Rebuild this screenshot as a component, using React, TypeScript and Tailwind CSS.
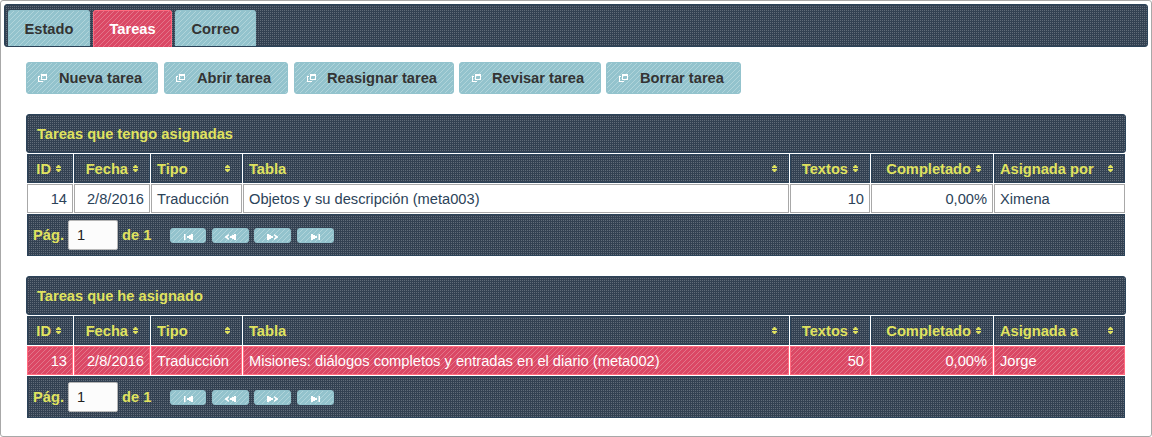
import React, { useState } from "react";

const dots =
  "bg-[#334152] bg-[conic-gradient(from_90deg_at_50%_50%,#616c79_25%,transparent_0)] bg-[length:2px_2px]";
const aqua =
  "bg-[#93c3cd] bg-[linear-gradient(135deg,transparent_44%,#b0d4da_44%,#b0d4da_56%,transparent_56%)] bg-[length:5px_5px] border border-[#93c3cd]";
const rose =
  "bg-[#db4865] bg-[linear-gradient(135deg,transparent_44%,#e2768a_44%,#e2768a_56%,transparent_56%)] bg-[length:5px_5px] border border-[#ff6b7f]";

const grid = "grid grid-cols-[46px_76px_91px_546px_80px_122px_131px] gap-x-px";

function WindowIcon() {
  return (
    <svg className="shrink-0" width="9" height="8" viewBox="0 0 9 8" fill="#fff" shapeRendering="crispEdges">
      <path d="M3 0h6v6H3zM4 2v3h4V2z" fillRule="evenodd" />
      <path d="M0 2h2v1H1v4h4v1H0z" />
    </svg>
  );
}

function SortIcon() {
  return (
    <svg className="shrink-0" width="5" height="7" viewBox="0 0 5 7" fill="#e0e35f">
      <path d="M2 0h1l2 2v1H0V2zM0 4h5v1L3 7H2L0 5z" />
    </svg>
  );
}

const pagerPaths = [
  "M0 0h1.5v6H0zM9 0v6H7V5H5V4H3V2h2V1h2V0z",
  "M4 0v1.6L2.4 3 4 4.4V6L0 3.5v-1zM11 0v6H9V5H7V4H5V2h2V1h2V0z",
  "M7 0v1.6L8.6 3 7 4.4V6l4-2.5v-1zM0 0v6h2V5h2V4h2V2H4V1H2V0z",
  "M7.5 0H9v6H7.5zM0 0v6h2V5h2V4h2V2H4V1H2V0z",
];
const pagerBoxes = [
  "ml-[19px] w-9",
  "ml-1.5 w-[37px]",
  "ml-[5px] w-[37px]",
  "ml-1.5 w-[37px]",
];
const pagerNames = ["Primera", "Anterior", "Siguiente", "Última"];

function Pager() {
  const [page, setPage] = useState("1");
  return (
    <div className={`mx-px mt-px flex h-[42px] items-center border border-[#2c4359] pl-[5px] font-bold text-[#e0e35f] ${dots}`}>
      <span className="w-[35px]">Pág.</span>
      <input
        className="h-[30px] w-[50px] rounded-[2px] border border-[#b6b6b6] bg-[#fcfcfc] pl-2 font-normal text-[#222]"
        value={page}
        onChange={(e) => setPage(e.target.value)}
      />
      <span className="ml-1 w-[29px] whitespace-nowrap">de 1</span>
      {pagerPaths.map((d, i) => (
        <button
          key={i}
          aria-label={pagerNames[i]}
          className={`mt-px flex h-[15px] items-center justify-center rounded-[3px] pt-0.5 ${aqua} ${pagerBoxes[i]}`}
        >
          <svg width={i % 3 ? 11 : 9} height="6" viewBox={i % 3 ? "0 0 11 6" : "0 0 9 6"} fill="#fff">
            <path d={d} />
          </svg>
        </button>
      ))}
    </div>
  );
}

interface TableProps {
  title: string;
  lastColumn: string;
  row: string[];
  selected?: boolean;
}

function TaskTable({ title, lastColumn, row, selected }: TableProps) {
  const columns = ["ID", "Fecha", "Tipo", "Tabla", "Textos", "Completado", lastColumn];
  const right = [true, true, false, false, true, true, false];
  return (
    <section className="mb-5">
      <h2 className={`flex h-[39px] items-center rounded-[3px] border border-[#2c4359] pl-2.5 font-bold text-[#e0e35f] ${dots}`}>
        {title}
      </h2>
      <div className={`mx-px mt-px ${grid}`}>
        {columns.map((c, i) => (
          <div
            key={c}
            className={`flex h-[29px] items-center whitespace-nowrap border border-[#2c4359] pr-[11px] font-bold text-[#e0e35f] ${dots} ${
              right[i] ? "justify-end gap-[5px]" : "justify-between pl-[5px]"
            }`}
          >
            <span>{c}</span>
            <SortIcon />
          </div>
        ))}
      </div>
      <div className={`mx-px mt-px ${grid}`}>
        {row.map((c, i) => (
          <div
            key={i}
            className={`flex h-[29px] items-center whitespace-nowrap px-[5px] ${right[i] ? "justify-end" : ""} ${
              selected ? `${rose} text-white` : "border border-[#a8a8a8] bg-white text-[#2c4359]"
            }`}
          >
            {c}
          </div>
        ))}
      </div>
      <Pager />
    </section>
  );
}

export default function App() {
  const buttons: [string, string, string][] = [
    ["Nueva tarea", "w-[132px] pl-[11px]", "ml-3"],
    ["Abrir tarea", "ml-1.5 w-[124px] pl-[11px]", "ml-3"],
    ["Reasignar tarea", "ml-1.5 w-[160px] pl-3", "ml-[11px]"],
    ["Revisar tarea", "ml-[5px] w-[142px] pl-3", "ml-[11px]"],
    ["Borrar tarea", "ml-[5px] w-[135px] pl-3", "ml-3"],
  ];
  return (
    <div className="h-[437px] w-[1152px] overflow-hidden rounded-[3px] border border-[#a8a8a8] bg-white p-[3px] font-['Liberation_Sans',Arial,sans-serif] text-[14.667px] leading-[18px]">
      <nav className={`flex h-[43px] items-end rounded-[3px] border border-[#2c4359] pl-[3px] font-bold ${dots}`}>
        <button className={`h-9 w-[82px] rounded-t-[3px] border-b-0 text-[#333] ${aqua}`}>Estado</button>
        <button className={`-mb-px ml-[3px] h-[37px] w-[79px] rounded-t-[3px] pb-px text-white ${rose} border-b-0`}>Tareas</button>
        <button className={`ml-[3px] h-9 w-[81px] rounded-t-[3px] border-b-0 text-[#333] ${aqua}`}>Correo</button>
      </nav>
      <main className="px-[22px] pt-[15px]">
        <div className="mb-5 flex">
          {buttons.map(([label, box, gap]) => (
            <button key={label} className={`flex h-8 items-center whitespace-nowrap rounded-[3px] font-bold text-[#333] ${aqua} ${box}`}>
              <WindowIcon />
              <span className={gap}>{label}</span>
            </button>
          ))}
        </div>
        <TaskTable
          title="Tareas que tengo asignadas"
          lastColumn="Asignada por"
          row={["14", "2/8/2016", "Traducción", "Objetos y su descripción (meta003)", "10", "0,00%", "Ximena"]}
        />
        <TaskTable
          title="Tareas que he asignado"
          lastColumn="Asignada a"
          row={["13", "2/8/2016", "Traducción", "Misiones: diálogos completos y entradas en el diario (meta002)", "50", "0,00%", "Jorge"]}
          selected
        />
      </main>
    </div>
  );
}
